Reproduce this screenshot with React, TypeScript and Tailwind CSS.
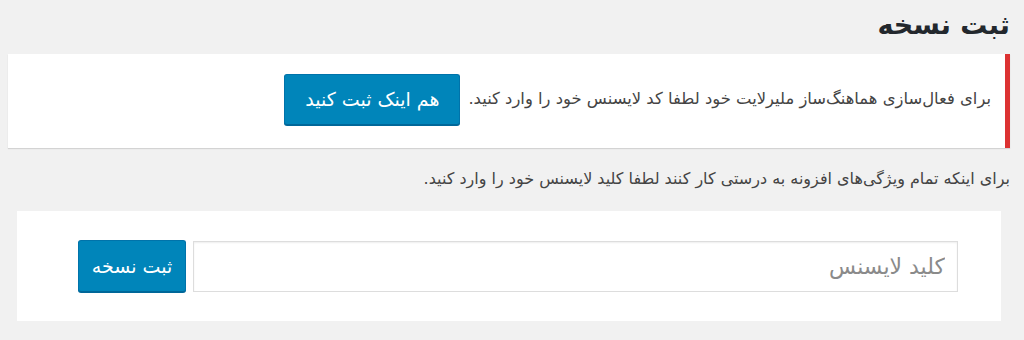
import React from "react";

const font = { fontFamily: '"DejaVu Sans", sans-serif' };

const App = () => {
  return (
    <div
      dir="rtl"
      style={font}
      className="w-[1024px] h-[340px] bg-[#f1f1f1] pr-[14px] pl-2 text-[#444] overflow-hidden"
    >
      <h1 className="pt-[3px] h-[54px] text-[27px] leading-[44px] font-bold text-[#23282d]">
        ثبت نسخه
      </h1>

      <div className="flex items-center h-[94px] bg-white border-r-[5px] border-[#dc3232] shadow-[0_1px_1px_rgba(0,0,0,0.12)] pr-[14px] pb-[4px]">
        <p className="text-[16.4px]">
          برای فعال‌سازی هماهنگ‌ساز ملیرلایت خود لطفا کد لایسنس خود را وارد کنید.
        </p>
        <button className="mr-2 w-[176px] h-[51px] rounded-[3px] bg-[#0085ba] border border-[#0073aa] border-b-[#006799] text-white text-[19px] shadow-[0_1px_0_#006799]">
          هم اینک ثبت کنید
        </button>
      </div>

      <p className="mt-[19px] text-[16px] leading-[24px]">
        برای اینکه تمام ویژگی‌های افزونه به درستی کار کنند لطفا کلید لایسنس خود را وارد کنید.
      </p>

      <div className="mx-[9px] mt-[20px] h-[110px] bg-white flex items-center pr-[43px]">
        <input
          placeholder="کلید لایسنس"
          className="w-[765px] h-[51px] border border-[#ddd] shadow-[inset_0_1px_2px_rgba(0,0,0,0.07)] px-3 text-[22px] placeholder:text-[#8a8a8a] outline-none"
          style={font}
        />
        <button className="mr-[7px] w-[108px] h-[52px] rounded-[3px] bg-[#0085ba] border border-[#0073aa] border-b-[#006799] text-white text-[19px] shadow-[0_1px_0_#006799]">
          ثبت نسخه
        </button>
      </div>
    </div>
  );
};

export default App;
